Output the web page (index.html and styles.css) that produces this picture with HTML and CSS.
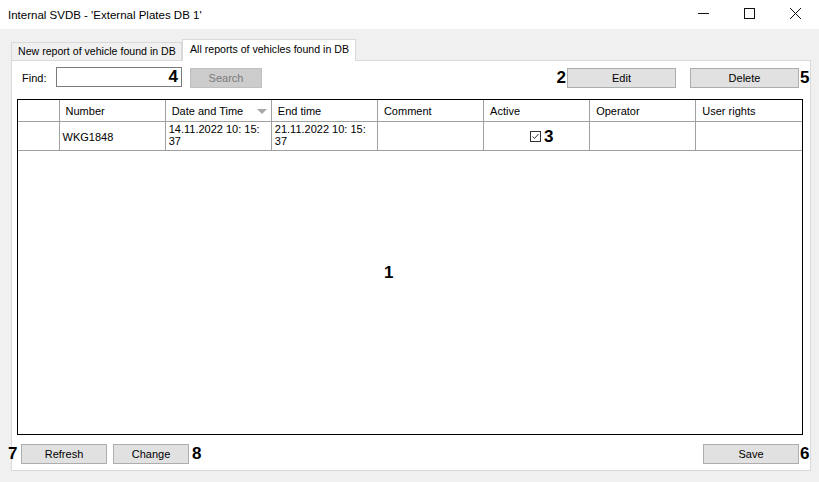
FILE: index.html
```html
<!DOCTYPE html>
<html>
<head>
<meta charset="utf-8">
<link rel="stylesheet" href="styles.css">
</head>
<body>
<div class="window">
  <div class="titlebar">
    <div class="title">Internal SVDB - 'External Plates DB 1'</div>
    <div class="controls">
      <svg class="ctl" width="46" height="29" viewBox="0 0 46 29"><line x1="18" y1="13.5" x2="29" y2="13.5" stroke="#111" stroke-width="1"/></svg>
      <svg class="ctl" width="46" height="29" viewBox="0 0 46 29"><rect x="18.5" y="8.5" width="10" height="10" fill="none" stroke="#111" stroke-width="1"/></svg>
      <svg class="ctl" width="46" height="29" viewBox="0 0 46 29"><path d="M18 8 L29 19 M29 8 L18 19" stroke="#111" stroke-width="1"/></svg>
    </div>
  </div>
  <div class="main">
    <div class="tabs">
      <div class="tab">New report of vehicle found in DB</div>
      <div class="tab active">All reports of vehicles found in DB</div>
    </div>
    <div class="panel">
      <div class="toolbar">
        <span class="find-label">Find:</span>
        <div class="input"><span class="num">4</span></div>
        <button class="btn disabled search">Search</button>
        <div class="spacer"></div>
        <span class="num mark">2</span>
        <button class="btn edit">Edit</button>
        <button class="btn delete">Delete</button>
        <span class="num mark end">5</span>
      </div>
      <div class="grid">
        <table>
          <colgroup>
            <col class="c-rh"><col class="c"><col class="c"><col class="c"><col class="c"><col class="c"><col class="c"><col class="c">
          </colgroup>
          <thead>
            <tr>
              <th></th>
              <th>Number</th>
              <th class="sorted">Date and Time<span class="sort"></span></th>
              <th>End time</th>
              <th>Comment</th>
              <th>Active</th>
              <th>Operator</th>
              <th>User rights</th>
            </tr>
          </thead>
          <tbody>
            <tr>
              <td></td>
              <td class="mid">WKG1848</td>
              <td>14.11.2022 10: 15:<br>37</td>
              <td>21.11.2022 10: 15:<br>37</td>
              <td></td>
              <td class="check-cell"><span class="checkbox"><svg width="11" height="11" viewBox="0 0 11 11"><rect x="0.5" y="0.5" width="10" height="10" fill="#fff" stroke="#333"/><path d="M2.5 5.5 L4.5 7.5 L8.5 3" fill="none" stroke="#333" stroke-width="1"/></svg></span><span class="num">3</span></td>
              <td></td>
              <td></td>
            </tr>
          </tbody>
        </table>
        <div class="center-mark"><span class="num">1</span></div>
      </div>
      <div class="bottom">
        <span class="num mark seven">7</span>
        <button class="btn refresh">Refresh</button>
        <button class="btn change">Change</button>
        <span class="num mark after-change">8</span>
        <div class="spacer"></div>
        <button class="btn save">Save</button>
        <span class="num mark end">6</span>
      </div>
    </div>
  </div>
</div>
</body>
</html>
```

FILE: styles.css
```css
* { box-sizing: border-box; }
html, body { margin: 0; padding: 0; }
body {
  width: 819px;
  height: 482px;
  overflow: hidden;
  background: #f0f0f0;
  font-family: "Liberation Sans", Arial, sans-serif;
  font-size: 11px;
  color: #000;
}
.window { width: 819px; height: 482px; display: flex; flex-direction: column; }
.titlebar {
  height: 29px;
  background: #fff;
  display: flex;
  align-items: center;
  justify-content: space-between;
}
.title { padding-left: 8px; font-size: 11.5px; color: #000; }
.controls { display: flex; margin-right: 1px; }
.ctl { display: block; }
.main { padding: 9px 8px 0 11px; }
.tabs { display: flex; align-items: flex-end; height: 22px; }
.tab {
  height: 18px;
  width: 171px;
  border: 1px solid #d9d9d9;
  border-bottom: none;
  background: #f0f0f0;
  padding: 2px 0 0 6px;
  white-space: nowrap;
  font-size: 10.6px;
}
.tab.active {
  height: 22px;
  width: 174px;
  background: #fff;
  padding: 3px 0 0 7px;
  margin-bottom: -1px;
  position: relative;
  z-index: 1;
}
.panel {
  width: 800px;
  height: 411px;
  background: #fff;
  border: 1px solid #dadada;
  display: flex;
  flex-direction: column;
}
.toolbar {
  display: flex;
  align-items: flex-start;
  height: 28px;
  padding-top: 6px;
}
.find-label { width: 44px; padding-left: 10px; padding-top: 5px; }
.input {
  width: 126px;
  height: 20px;
  border: 1px solid #7a7a7a;
  display: flex;
  justify-content: flex-end;
  align-items: center;
  padding-right: 3px;
}
.num { font-weight: bold; font-size: 17px; line-height: 18px; }
.btn {
  font-family: inherit;
  font-size: 11px;
  color: #000;
  background: #e1e1e1;
  border: 1px solid #adadad;
  height: 20px;
  padding: 0;
  margin-top: 1px;
}
.btn.disabled { background: #cccccc; border-color: #bfbfbf; color: #7a7a7a; }
.search { width: 72px; margin-left: 8px; }
.spacer { flex: 1; }
.mark { padding-top: 2px; }
.edit { width: 109px; margin-left: 1px; }
.delete { width: 109px; margin-left: 14px; }
.mark.end { width: 10px; margin-left: 1px; }
.grid {
  margin: 10px 0 0 5px;
  width: 786px;
  height: 336px;
  border: 1px solid #000;
  position: relative;
}
table { border-collapse: collapse; table-layout: fixed; width: 784px; }
.c-rh { width: 41px; }
.c { width: 106px; }
th {
  height: 21px;
  font-weight: normal;
  text-align: left;
  padding: 2px 0 0 6px;
  border-right: 1px solid #a0a0a0;
  border-bottom: 1px solid #a0a0a0;
  position: relative;
  white-space: nowrap;
}
th:last-child { border-right: none; }
td {
  height: 29px;
  padding: 1px 0 0 3px;
  border-right: 1px solid #a0a0a0;
  border-bottom: 1px solid #a0a0a0;
  vertical-align: top;
  line-height: 12px;
}
td:last-child { border-right: none; }
td.mid { vertical-align: middle; padding-top: 2px; }
.sort {
  position: absolute;
  right: 4px;
  top: 9px;
  width: 0; height: 0;
  border-left: 5px solid transparent;
  border-right: 5px solid transparent;
  border-top: 5px solid #a7a7a7;
}
.check-cell { vertical-align: middle; padding: 2px 0 0 46px; }
.checkbox { display: inline-block; vertical-align: middle; margin-right: 3px; }
.checkbox svg { display: block; }
.check-cell .num { vertical-align: middle; }
.center-mark {
  position: absolute;
  left: 366px;
  top: 164px;
}
.bottom {
  display: flex;
  align-items: flex-start;
  margin-top: 8px;
  padding-left: 9px;
  position: relative;
}
.seven { position: absolute; left: -4px; top: 0; }
.refresh { width: 86px; margin-left: 0; }
.change { width: 76px; margin-left: 6px; }
.after-change { margin-left: 3px; }
.save { width: 96px; }
```
